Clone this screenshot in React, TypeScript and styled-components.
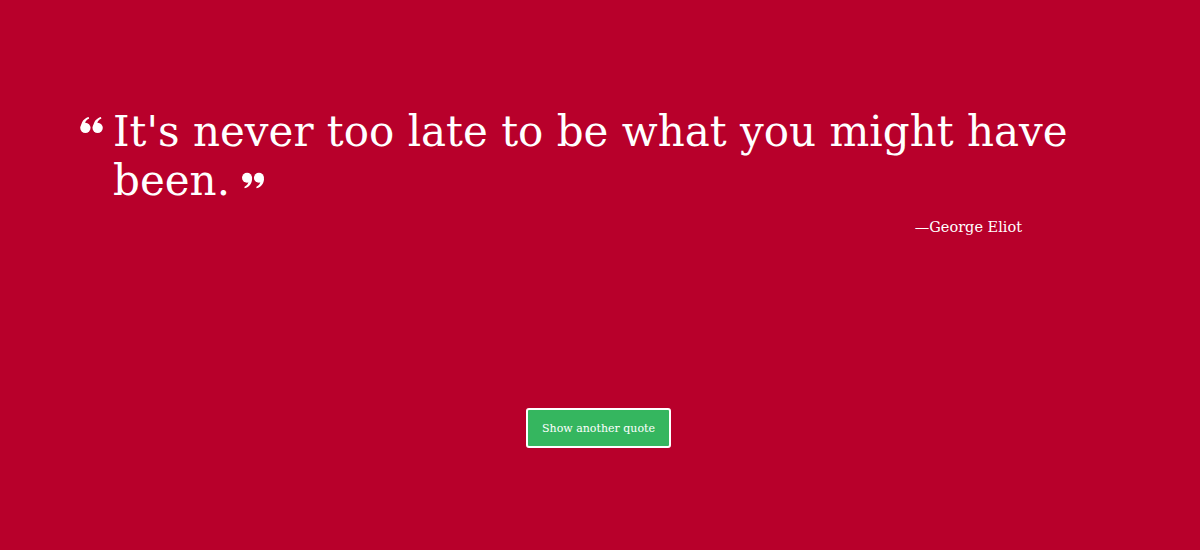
import React from 'react'
import styled, { createGlobalStyle } from 'styled-components';

const palette = {
  red: '#b8002b',
  green: '#35b65f',
  white: '#ffffff',
};

const GlobalStyle = createGlobalStyle`
  html, body {
    margin: 0;
    padding: 0;
    background-color: ${palette.red};
  }
`

const Page = styled.div`
  background-color: ${palette.red};
  width: 1200px;
  height: 550px;
  display: flex;
  flex-direction: column;
  align-items: center;
  box-sizing: border-box;
  padding-top: 107px;
  font-family: "DejaVu Serif", "Liberation Serif", serif;
  color: ${palette.white};
`
const QuoteBox = styled.div`
  width: 1040px;
  display: flex;
  flex-direction: column;
`
const QuoteRow = styled.div`
  display: flex;
  align-items: flex-start;
  gap: 10px;
`
const QuoteText = styled.p`
  margin: 0;
  font-size: 42px;
  line-height: 49px;
  font-weight: normal;
`
const Mark = styled.svg<{ $top: number }>`
  width: 23px;
  height: 16px;
  fill: ${palette.white};
  margin-top: ${p => p.$top}px;
  flex-shrink: 0;
`
const Author = styled.p`
  margin: 14px 98px 0 0;
  text-align: right;
  font-size: 14.5px;
`
const Button = styled.button`
  margin: 173px 3px 0 0;
  background-color: ${palette.green};
  color: ${palette.white};
  border: 2px solid ${palette.white};
  border-radius: 3px;
  width: 145px;
  height: 40px;
  font-family: "DejaVu Serif", serif;
  font-size: 11px;
  cursor: pointer;
`

const OpenQuote: React.FC = () => (
  <Mark $top={10} viewBox="0 0 24 17">
    <circle cx="5.5" cy="11.5" r="5.5" />
    <path d="M1 11 C1 5 4 1.5 9 0 L9.5 1.5 C6 3 4.5 6 5 9 Z" />
    <circle cx="18.5" cy="11.5" r="5.5" />
    <path d="M14 11 C14 5 17 1.5 22 0 L22.5 1.5 C19 3 17.5 6 18 9 Z" />
  </Mark>
)

const CloseMark = styled.svg`
  width: 22px;
  height: 17px;
  fill: ${palette.white};
  margin-left: 12px;
  vertical-align: 6px;
`

const CloseQuote: React.FC = () => (
  <CloseMark viewBox="0 0 24 17">
    <circle cx="5.5" cy="5.5" r="5.5" />
    <path d="M11 6 C11 12 8 15.5 3 17 L2.5 15.5 C6 14 7.5 11 7 8 Z" />
    <circle cx="18.5" cy="5.5" r="5.5" />
    <path d="M24 6 C24 12 21 15.5 16 17 L15.5 15.5 C19 14 20.5 11 20 8 Z" />
  </CloseMark>
)

const App: React.FC = () => {
  return (
    <>
      <GlobalStyle />
      <Page>
        <QuoteBox>
          <QuoteRow>
            <OpenQuote />
            <QuoteText>
              It's never too late to be what you might have been.<CloseQuote />
            </QuoteText>
          </QuoteRow>
          <Author>—George Eliot</Author>
        </QuoteBox>
        <Button>Show another quote</Button>
      </Page>
    </>
  )
}

export default App
